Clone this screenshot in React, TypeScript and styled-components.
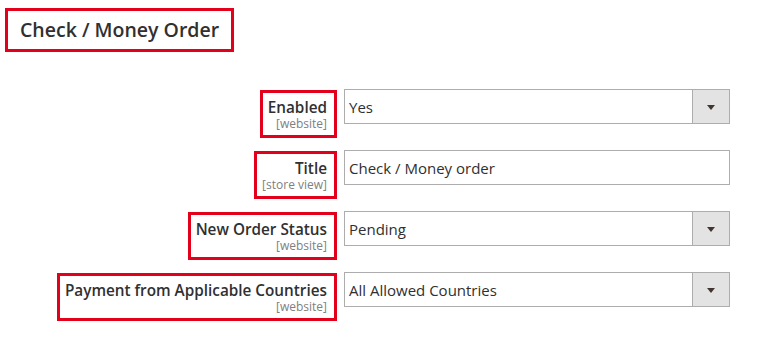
import React from "react";
import styled, { createGlobalStyle } from "styled-components";

const Global = createGlobalStyle`
  html, body { margin: 0; padding: 0; background: #ffffff; }
  body { font-family: "Open Sans", "Noto Sans", sans-serif; color: #303030; }
`;

const Page = styled.div`
  width: 765px;
  height: 345px;
  padding: 8px 0 0 5px;
  box-sizing: border-box;
  overflow: hidden;
`;

const Heading = styled.div`
  display: inline-block;
  border: 3px solid #e2001a;
  padding: 0 12px;
  height: 38px;
  line-height: 38px;
  font-size: 19.5px;
  font-weight: 600;
  color: #303030;
`;

const Form = styled.div`
  display: grid;
  grid-template-columns: 337px 386px;
  grid-auto-rows: 35px;
  column-gap: 7px;
  row-gap: 26px;
  margin-top: 37px;
  margin-left: -5px;
`;

const LabelCell = styled.div`
  display: flex;
  justify-content: flex-end;
  align-items: flex-start;
  height: 35px;
  overflow: visible;
`;

const LabelBox = styled.div`
  margin-top: 1px;
  border: 3px solid #e2001a;
  padding: 5px 7px 4px 5px;
  display: flex;
  flex-direction: column;
  align-items: flex-end;
  white-space: nowrap;
  background: #ffffff;
`;

const LabelText = styled.span`
  font-size: 15.3px;
  line-height: 18px;
  font-weight: 600;
  color: #303030;
`;

const Scope = styled.span`
  font-size: 12px;
  line-height: 15px;
  color: #808080;
`;

const Field = styled.div`
  height: 35px;
  box-sizing: border-box;
  border: 1px solid #adadad;
  background: #ffffff;
  display: flex;
  align-items: stretch;
`;

const Value = styled.div`
  flex: 1;
  display: flex;
  align-items: center;
  padding-left: 4px;
  font-size: 15px;
  color: #303030;
`;

const ArrowButton = styled.div`
  width: 36px;
  border-left: 1px solid #adadad;
  background: #e3e3e3;
  display: flex;
  align-items: center;
  justify-content: center;
`;

const Arrow = styled.div`
  width: 0;
  height: 0;
  margin-top: 1px;
  border-left: 4px solid transparent;
  border-right: 4px solid transparent;
  border-top: 5px solid #41362f;
`;

type FieldDef = { label: string; scope: string; value: string; select: boolean };

const fields: FieldDef[] = [
  { label: "Enabled", scope: "[website]", value: "Yes", select: true },
  { label: "Title", scope: "[store view]", value: "Check / Money order", select: false },
  { label: "New Order Status", scope: "[website]", value: "Pending", select: true },
  { label: "Payment from Applicable Countries", scope: "[website]", value: "All Allowed Countries", select: true },
];

export default function App() {
  return (
    <>
      <Global />
      <Page>
        <Heading>Check / Money Order</Heading>
        <Form>
          {fields.map((f) => (
            <React.Fragment key={f.label}>
              <LabelCell>
                <LabelBox>
                  <LabelText>{f.label}</LabelText>
                  <Scope>{f.scope}</Scope>
                </LabelBox>
              </LabelCell>
              <Field>
                <Value>{f.value}</Value>
                {f.select && (
                  <ArrowButton>
                    <Arrow />
                  </ArrowButton>
                )}
              </Field>
            </React.Fragment>
          ))}
        </Form>
      </Page>
    </>
  );
}
